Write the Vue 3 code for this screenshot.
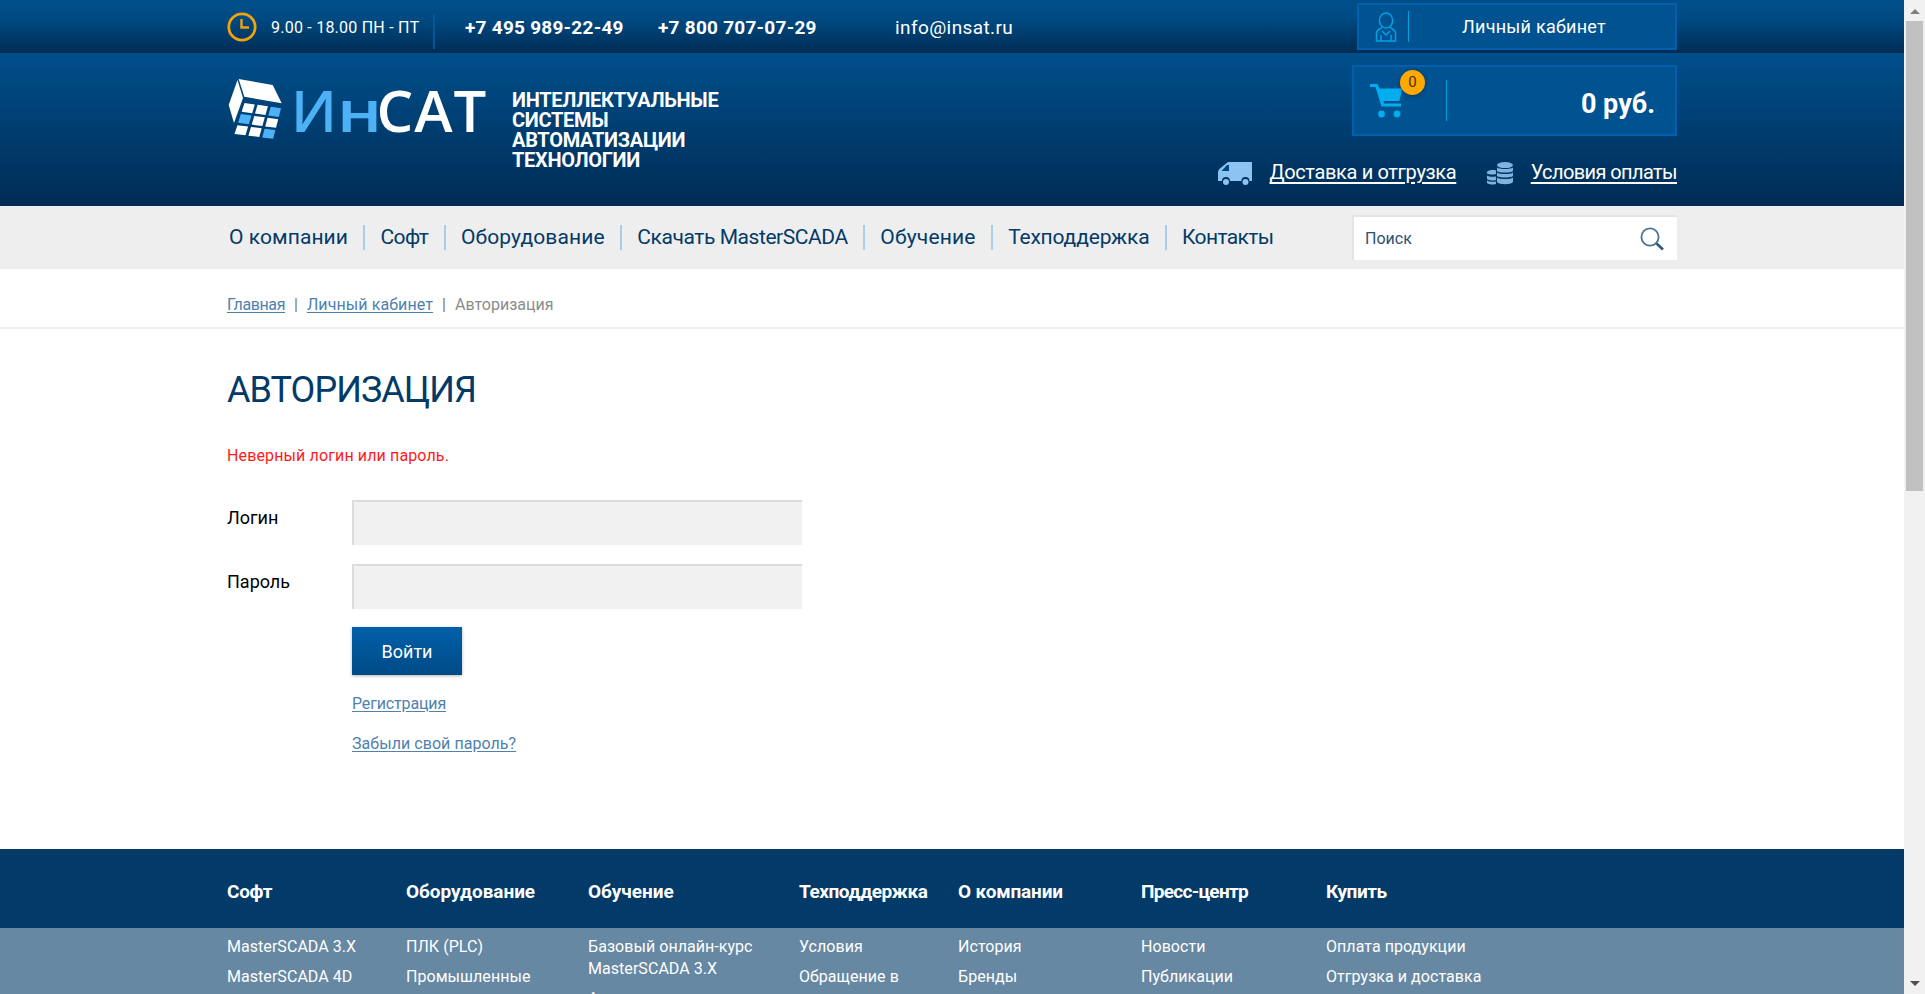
<script setup>
const nav = [
  { label: 'О компании', spacing: 0.07 },
  { label: 'Софт', spacing: -0.6 },
  { label: 'Оборудование', spacing: 0.1 },
  { label: 'Скачать MasterSCADA', spacing: -0.43 },
  { label: 'Обучение', spacing: 0.16 },
  { label: 'Техподдержка', spacing: -0.2 },
  { label: 'Контакты', spacing: -0.6 }
]

const columns = [
  { title: 'Софт', spacing: -0.3, items: ['MasterSCADA 3.X', 'MasterSCADA 4D', 'Lufkin'] },
  { title: 'Оборудование', spacing: -0.05, items: ['ПЛК (PLC)', 'Промышленные компьютеры'] },
  { title: 'Обучение', spacing: -0.05, items: ['Базовый онлайн-курс MasterSCADA 3.X', 'Авторизованные курсы'] },
  { title: 'Техподдержка', spacing: -0.45, items: ['Условия', 'Обращение в техподдержку'] },
  { title: 'О компании', spacing: -0.15, items: ['История', 'Бренды', 'Партнёры'] },
  { title: 'Пресс-центр', spacing: -0.7, items: ['Новости', 'Публикации', 'Видео'] },
  { title: 'Купить', spacing: -0.45, items: ['Оплата продукции', 'Отгрузка и доставка', 'Контакты'] }
]

const corners = { tl: [27.5, 31.5], tr: [66.7, 37.3], br: [58.3, 70], bl: [16.7, 65] }
function point(u, v) {
  const x0 = corners.tl[0] + (corners.tr[0] - corners.tl[0]) * u
  const y0 = corners.tl[1] + (corners.tr[1] - corners.tl[1]) * u
  const x1 = corners.bl[0] + (corners.br[0] - corners.bl[0]) * u
  const y1 = corners.bl[1] + (corners.br[1] - corners.bl[1]) * u
  return `${(x0 + (x1 - x0) * v).toFixed(1)},${(y0 + (y1 - y0) * v).toFixed(1)}`
}
const blueCells = new Set(['0-2', '1-0', '2-2'])
const cells = []
for (let r = 0; r < 3; r++) {
  for (let c = 0; c < 3; c++) {
    const g = 0.035
    const u0 = c / 3 + g, u1 = (c + 1) / 3 - g
    const v0 = r / 3 + g, v1 = (r + 1) / 3 - g
    cells.push({
      key: `${r}-${c}`,
      points: [point(u0, v0), point(u1, v0), point(u1, v1), point(u0, v1)].join(' '),
      fill: blueCells.has(`${r}-${c}`) ? '#4db2f5' : '#ffffff'
    })
  }
}
</script>

<template>
  <div class="shell">
    <div class="page">
      <div class="topbar">
        <div class="wrap top-row">
          <svg class="clock" width="30" height="30" viewBox="0 0 30 30">
            <circle cx="15" cy="15" r="13.2" fill="none" stroke="#f0a30a" stroke-width="2.8" />
            <path d="M14.5 7v8.5H22" fill="none" stroke="#f0a30a" stroke-width="2.4" />
          </svg>
          <span class="hours">9.00 - 18.00 ПН - ПТ</span>
          <span class="top-sep"></span>
          <span class="phone first">+7 495 989-22-49</span>
          <span class="phone second">+7 800 707-07-29</span>
          <span class="email">info@insat.ru</span>
          <a class="account">
            <svg class="user" width="22" height="30" viewBox="0 0 22 30" fill="none" stroke="#00a3e8" stroke-width="1.5">
              <ellipse cx="11" cy="8.5" rx="6.6" ry="7.6" />
              <path d="M7 15c-1 2-5 2.500-5.500 5.500V29h19v-8.500C20 17.500 16 17 15 15" />
              <path d="M6 29v-6M16 29v-6M7 19l4 4 4-4" />
            </svg>
            <span class="acc-sep"></span>
            <span class="acc-text">Личный кабинет</span>
          </a>
        </div>
      </div>

      <header class="masthead">
        <div class="wrap head-row">
          <div class="brand">
            <svg class="cube" width="56" height="64" viewBox="12 8 56 64">
              <polygon points="22.7,9 56.700,15 65.700,33.300 28.300,26.700" fill="#fff" />
              <polygon points="21.500,10 12.700,35 18,53 27,28" fill="#fff" />
              <polygon v-for="cell in cells" :key="cell.key" :points="cell.points" :fill="cell.fill" />
            </svg>
            <span class="wordmark"><span class="wm-blue">И<span class="wm-n">н</span></span>САТ</span>
            <div class="tagline">Интеллектуальные<br />системы<br />автоматизации<br />технологии</div>
          </div>
          <div class="head-right">
            <a class="cart">
              <span class="cart-icon">
                <svg width="34" height="36" viewBox="0 0 34 36" fill="#00aeef">
                  <path d="M0 1h7.500l2 4.500H32.500l-3.200 12.500H13.500l.8 2.500H31v3H11.500L5.500 4H0z" />
                  <circle cx="11.500" cy="31" r="3.400" />
                  <circle cx="27" cy="31" r="3.400" />
                </svg>
                <span class="badge">0</span>
              </span>
              <span class="cart-sep"></span>
              <span class="cart-sum">0 руб.</span>
            </a>
            <div class="head-links">
              <svg width="34" height="24" viewBox="0 0 34 24" fill="#8cc3f3">
                <path d="M10 0h24v19h-2.500a4 4 0 0 0-8 0H12a4 4 0 0 0-8 0H0V11c0-2 .5-3 2-4.500z" />
                <path d="M9 3L3.500 9H11V3z" fill="#00477f" />
                <circle cx="8" cy="20" r="3" />
                <circle cx="27.500" cy="20" r="3" />
              </svg>
              <a class="hl delivery">Доставка и отгрузка</a>
              <svg class="coins" width="26" height="24" viewBox="0 0 26 24" fill="#80b4df">
                <ellipse cx="18" cy="3" rx="8" ry="3" />
                <path d="M10 5.500c2 2 14 2 16 0V9c-2 2-14 2-16 0zM10 10.500c2 2 14 2 16 0V14c-2 2-14 2-16 0zM10 15.500c2 2 14 2 16 0V20c-2 3-14 3-16 0z" />
                <path d="M0 10c1-2 7-2.500 9-1.500V12c-3 1-7 .5-9-.5zM0 13.500c2 1.500 6 1.500 9 1V18c-3 1-7 .5-9-1zM0 18.500c2 1.500 6 1.500 9 1V22c-3 1-7 .5-9-1z" />
              </svg>
              <a class="hl payment">Условия оплаты</a>
            </div>
          </div>
        </div>
      </header>

      <nav class="navbar">
        <div class="wrap nav-row">
          <ul class="menu">
            <li v-for="item in nav" :key="item.label" :style="{ letterSpacing: item.spacing + 'px' }">{{ item.label }}</li>
          </ul>
          <div class="search">
            <input class="search-input" type="text" placeholder="Поиск" />
            <svg width="25" height="24" viewBox="0 0 25 24" fill="none">
              <circle cx="10" cy="10" r="8.600" stroke="#4a7396" stroke-width="1.800" />
              <path d="M16.500 16.500l6.500 6" stroke="#2f5878" stroke-width="2.600" />
            </svg>
          </div>
        </div>
      </nav>

      <div class="crumbs">
        <div class="wrap crumb-row">
          <a class="link home">Главная</a>
          <span class="cs">|</span>
          <a class="link cab">Личный кабинет</a>
          <span class="cs">|</span>
          <span class="current">Авторизация</span>
        </div>
      </div>

      <main class="wrap content">
        <h1>АВТОРИЗАЦИЯ</h1>
        <p class="error">Неверный логин или пароль.</p>
        <form class="form" @submit.prevent>
          <label class="field">
            <span class="label">Логин</span>
            <input type="text" />
          </label>
          <label class="field">
            <span class="label">Пароль</span>
            <input type="password" />
          </label>
          <div class="actions">
            <button type="submit">Войти</button>
            <a class="link reg">Регистрация</a>
            <a class="link forgot">Забыли свой пароль?</a>
          </div>
        </form>
      </main>

      <footer class="footer">
        <div class="foot-head">
          <div class="wrap foot-grid">
            <strong v-for="col in columns" :key="col.title" :style="{ letterSpacing: col.spacing + 'px' }">{{ col.title }}</strong>
          </div>
        </div>
        <div class="foot-body">
          <div class="wrap foot-grid">
            <ul v-for="col in columns" :key="col.title">
              <li v-for="item in col.items" :key="item">{{ item }}</li>
            </ul>
          </div>
        </div>
      </footer>
    </div>

    <aside class="scrollbar">
      <span class="arrow up"></span>
      <span class="thumb"></span>
      <span class="spacer"></span>
      <span class="arrow down"></span>
    </aside>
  </div>
</template>

<style>
html, body {
  margin: 0;
  overflow: hidden;
}
</style>

<style scoped>
* { box-sizing: border-box; }
a { cursor: pointer; }
.shell {
  display: flex;
  width: 1925px;
  height: 994px;
  overflow: hidden;
  font-family: Roboto, "Liberation Sans", sans-serif;
  background: #fff;
  color: #000;
}
.page { width: 1904px; flex: none; }
.wrap { width: 1450px; margin: 0 auto; }

.topbar {
  height: 53px;
  background: linear-gradient(#004f8b 0%, #004a82 35%, #002c55 100%);
  color: #fff;
}
.top-row { display: flex; align-items: center; height: 53px; position: relative; }
.clock { flex: none; }
.hours { margin: 2px 0 0 14px; font-size: 16px; letter-spacing: 0.23px; width: 149px; white-space: nowrap; }
.top-sep { width: 2px; height: 35px; background: #00579c; margin-left: 13px; margin-top: 10px; }
.phone { font-size: 19px; font-weight: 700; white-space: nowrap; letter-spacing: 0.25px; margin-top: 2px; }
.phone.first { margin-left: 30px; width: 158px; }
.phone.second { margin-left: 35px; width: 157px; }
.email { font-size: 19px; margin: 2px 0 0 80px; width: 118px; white-space: nowrap; letter-spacing: 0.4px; }
.account {
  margin-left: auto;
  width: 320px;
  height: 47px;
  border: 2px solid #0060ad;
  background: #005290;
  display: flex;
  align-items: center;
}
.user { margin-left: 16px; flex: none; }
.acc-sep { width: 1px; height: 31px; background: #00a0e0; margin-left: 11px; }
.acc-text { flex: 1; text-align: center; font-size: 18px; letter-spacing: 0.26px; padding-right: 16px; }

.masthead {
  height: 153px;
  background: linear-gradient(#004f8b 0%, #002c55 100%);
  color: #fff;
}
.head-row { display: flex; justify-content: space-between; height: 153px; }
.brand { display: flex; align-items: flex-start; }
.cube { margin-top: 25px; margin-left: 1px; flex: none; }
.wordmark {
  margin-left: 7px;
  margin-top: 22px;
  font-family: "Open Sans", sans-serif;
  font-size: 58px;
  line-height: 70px;
  font-weight: 600;
  letter-spacing: 1px;
  white-space: nowrap;
  width: 221px;
}
.wm-blue { color: #4db2f5; letter-spacing: 0; }
.wm-n { display: inline-block; transform: scaleX(1.2); transform-origin: left center; margin-right: 2px; }
.tagline {
  margin-top: 37px;
  font-size: 20px;
  line-height: 20px;
  font-weight: 700;
  text-transform: uppercase;
  letter-spacing: -0.3px;
  white-space: nowrap;
}
.head-right { width: 325px; display: flex; flex-direction: column; align-items: flex-end; position: relative; }
.cart {
  width: 325px;
  height: 71px;
  margin-top: 12px;
  border: 2px solid #0060ad;
  background: #005290;
  display: flex;
  align-items: center;
}
.cart-icon { position: relative; margin-left: 16px; width: 34px; height: 36px; margin-top: 1px; flex: none; }
.badge {
  position: absolute;
  left: 30px;
  top: -13px;
  width: 25px;
  height: 25px;
  border-radius: 50%;
  background: #ffa800;
  color: #4a3000;
  font-size: 15px;
  line-height: 25px;
  text-align: center;
  box-shadow: 0 1px 4px rgba(0, 0, 0, 0.35);
}
.cart-sep { width: 1px; height: 41px; background: #00a0e0; margin-left: 42px; }
.cart-sum { flex: 1; text-align: right; padding: 7px 20px 0 0; font-size: 27px; font-weight: 700; }
.head-links {
  display: flex;
  align-items: center;
  height: 24px;
  margin-top: 26px;
  width: 459px;
  flex: none;
}
.hl {
  color: #fff;
  font-size: 20px;
  line-height: 24px;
  text-decoration: underline;
  text-underline-offset: 3px;
  white-space: nowrap;
}
.delivery { margin-left: 17.5px; width: 189.5px; margin-top: -4px; letter-spacing: -0.35px; }
.coins { margin-left: 28px; }
.payment { margin-left: 18px; margin-top: -4px; letter-spacing: -0.6px; }

.navbar { height: 63px; background: #eee; }
.nav-row { display: flex; justify-content: space-between; align-items: center; height: 63px; }
.menu { list-style: none; display: flex; margin: 0; padding: 0; margin-top: -1px; }
.menu li {
  font-size: 21px;
  line-height: 25px;
  color: #033a68;
  padding: 0 15.3px;
  border-right: 2px solid #a7cde9;
  white-space: nowrap;
}
.menu li:first-child { padding-left: 2px; }
.menu li:last-child { border-right: 0; }
.search {
  width: 325px;
  height: 45px;
  background: #fff;
  border-top: 2px solid #e4e4e4;
  border-left: 2px solid #e4e4e4;
  display: flex;
  align-items: center;
  padding: 0 12px 0 11px;
}
.search-input {
  flex: 1;
  min-width: 0;
  border: 0;
  outline: 0;
  background: none;
  padding: 0;
  font: 16px Roboto, sans-serif;
  color: #033a68;
}
.search-input::placeholder { color: #2c5170; opacity: 1; }

.crumbs { height: 60px; border-bottom: 2px solid #efefef; }
.crumb-row { display: flex; align-items: center; height: 58px; font-size: 16px; padding-top: 13px; }
.link { color: #4f81ad; text-decoration: underline; text-underline-offset: 2px; }
.home { letter-spacing: -0.4px; }
.cab { letter-spacing: 0.1px; }
.cs { color: #777; margin: 0 9px; }
.current { color: #8c8c8c; letter-spacing: 0; }

.content { height: 520px; }
h1 {
  margin: 0;
  padding-top: 38px;
  font-size: 36px;
  line-height: 46px;
  font-weight: 400;
  color: #033a68;
  letter-spacing: -0.95px;
}
.error { margin: 32px 0 0; font-size: 16px; line-height: 22px; color: #ff1a1a; letter-spacing: 0.13px; }
.form { margin-top: 33px; }
.field { display: flex; height: 45px; }
.field + .field { margin-top: 19px; }
.label { width: 125px; font-size: 18px; line-height: 35px; letter-spacing: 0; }
.field input {
  width: 450px;
  height: 45px;
  border: 0;
  border-top: 2px solid #dcdcdc;
  border-left: 2px solid #dcdcdc;
  background: #f1f1f1;
  outline: 0;
  padding: 0 10px;
}
.actions { margin: 18px 0 0 125px; display: flex; flex-direction: column; align-items: flex-start; }
button {
  width: 110px;
  height: 48px;
  border: 0;
  background: linear-gradient(#0060a9, #004a86);
  color: #fff;
  font: 18px Roboto, sans-serif;
  box-shadow: 0 1px 3px rgba(0, 0, 0, 0.3);
  padding: 0;
}
.reg, .forgot { font-size: 16px; line-height: 22px; }
.reg { margin-top: 18px; letter-spacing: -0.15px; }
.forgot { margin-top: 18px; letter-spacing: 0.05px; }

.foot-head { height: 79px; background: #033a68; }
.foot-grid {
  display: grid;
  grid-template-columns: 179px 182px 211px 159px 183px 185px 151px;
}
.foot-head .foot-grid { height: 79px; align-items: center; padding-top: 6px; }
.foot-head strong { color: #fff; font-size: 19px; font-weight: 700; white-space: nowrap; }
.foot-body { height: 300px; background: #6688a3; }
.foot-body ul { list-style: none; margin: 0; padding: 8px 14px 0 0; }
.foot-body ul:last-child { padding-right: 0; white-space: nowrap; }
.foot-body li {
  color: #fff;
  font-size: 16px;
  line-height: 22px;
  margin-bottom: 8px;
  letter-spacing: 0.05px;
}

.scrollbar {
  width: 21px;
  flex: none;
  background: #f1f1f1;
  display: flex;
  flex-direction: column;
  align-items: center;
}
.arrow { width: 0; height: 0; border-left: 5px solid transparent; border-right: 5px solid transparent; flex: none; }
.arrow.up { border-bottom: 5px solid #7f7f7f; margin-top: 9px; margin-bottom: 7px; }
.arrow.down { border-top: 5px solid #505050; margin-bottom: 8px; margin-top: 8px; }
.thumb { width: 17px; height: 470px; background: #c1c1c1; flex: none; }
.spacer { flex: 1; }
</style>
